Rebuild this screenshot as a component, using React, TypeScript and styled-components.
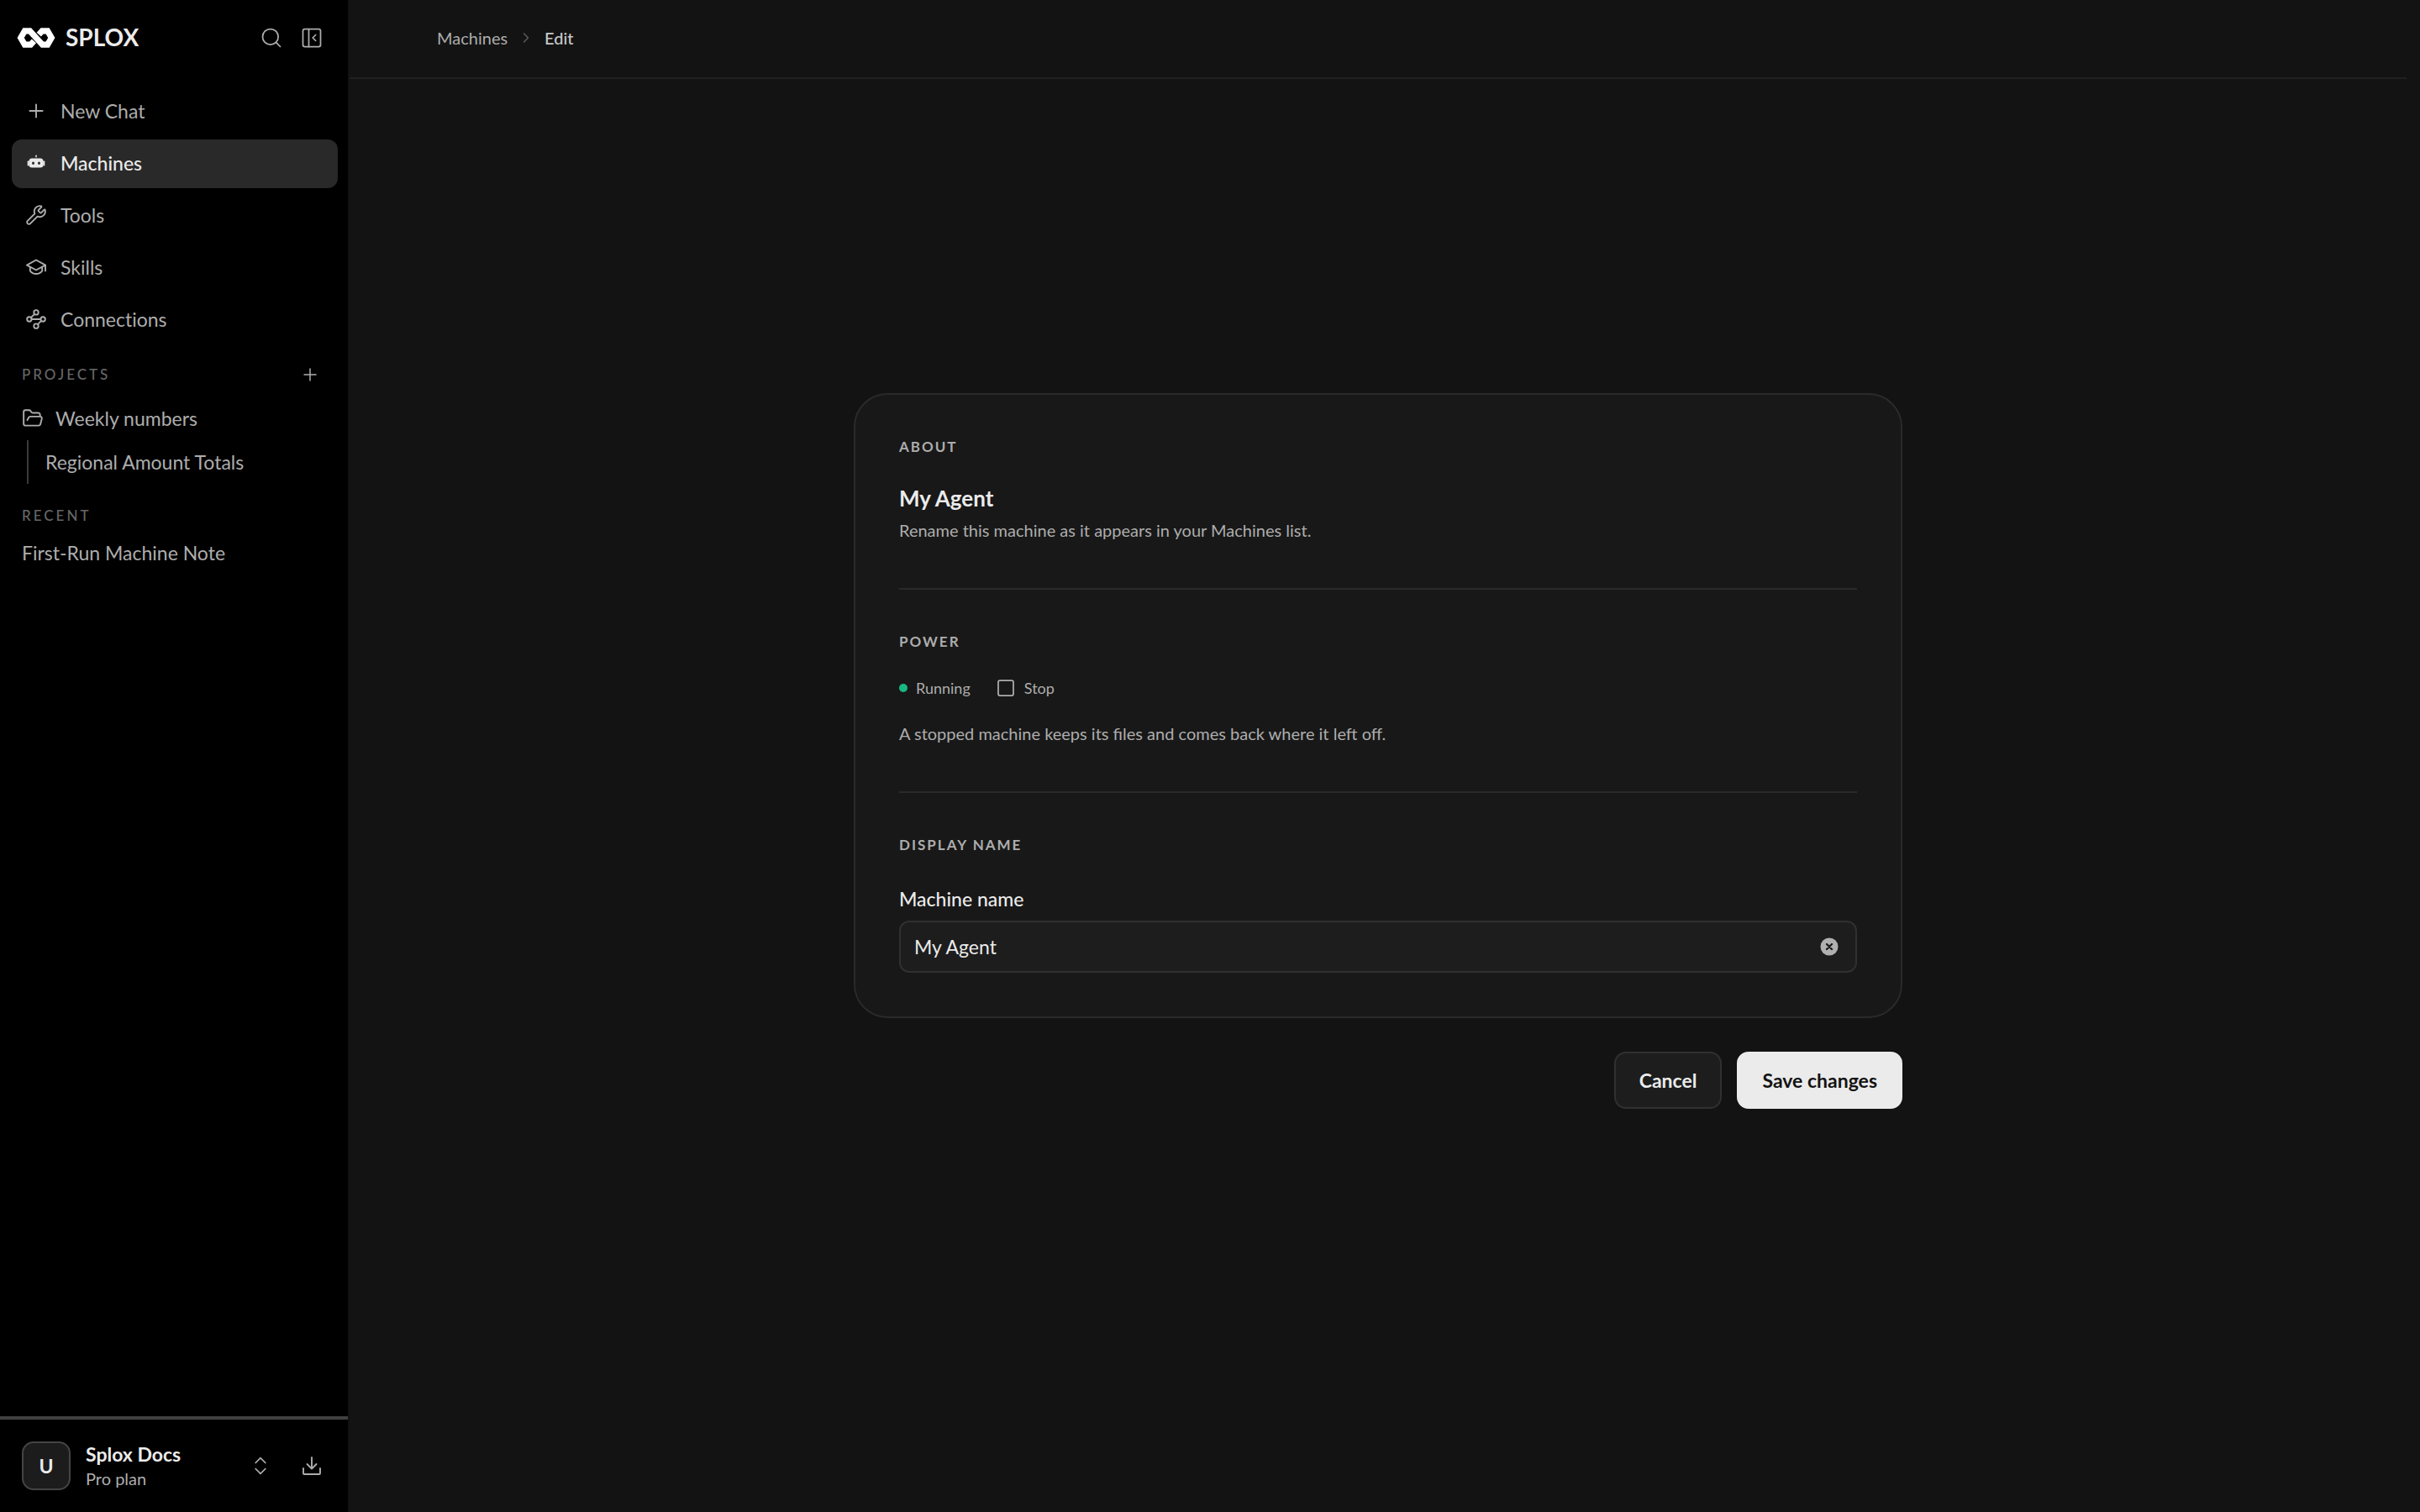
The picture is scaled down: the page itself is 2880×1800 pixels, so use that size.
import React, { useState } from "react";
import styled, { createGlobalStyle } from "styled-components";
import {
  ChevronRight,
  ChevronsUpDown,
  FolderOpen,
  PanelLeftClose,
  Plus,
  Search,
  Square,
  Waypoints,
  Wrench,
} from "lucide-react";

const color = {
  sidebar: "#000000",
  page: "#131313",
  card: "#181818",
  field: "#1d1d1d",
  active: "#292929",
  line: "#2a2a2a",
  headerLine: "#202020",
  strong: "#ebebeb",
  muted: "#adadad",
  faint: "#666666",
  green: "#19b883",
};

const GlobalStyle = createGlobalStyle`
  *, *::before, *::after { box-sizing: border-box; }
  body {
    margin: 0;
    background: ${color.page};
    color: ${color.strong};
    font-family: Lato, "Liberation Sans", sans-serif;
    font-size: 23px;
    line-height: 36px;
  }
  button, input { font: inherit; color: inherit; }
  button { margin: 0; padding: 0; border: 0; background: none; cursor: pointer; }
  a { color: inherit; text-decoration: none; }
  h1, h2, p, ul { margin: 0; padding: 0; }
  ul { list-style: none; }
  svg { display: block; flex: none; }
`;

const Shell = styled.div`
  display: flex;
  min-height: 100vh;
`;

/* Sidebar */

const Sidebar = styled.aside`
  display: flex;
  flex-direction: column;
  flex: none;
  width: 416px;
  background: ${color.sidebar};
  border-right: 2px solid #111111;
`;

const Brand = styled.div`
  display: flex;
  align-items: center;
  gap: 12px;
  height: 90px;
  padding: 0 28px 0 20px;
  margin-bottom: 14px;
`;

const BrandName = styled.span`
  flex: 1;
  padding-bottom: 2px;
  font-size: 28px;
  font-weight: 700;
`;

const IconButton = styled.button`
  display: grid;
  place-items: center;
  width: 30px;
  height: 30px;
  color: ${color.muted};
`;

const BrandActions = styled.div`
  display: flex;
  gap: 18px;
`;

const NavList = styled.ul`
  display: flex;
  flex-direction: column;
  gap: 4px;
  padding: 0 12px 0 14px;
`;

const NavLink = styled.a<{ $active?: boolean }>`
  display: flex;
  align-items: center;
  gap: 16px;
  height: 58px;
  padding: 0 16px 2px;
  border-radius: 12px;
  background: ${(p) => (p.$active ? color.active : "transparent")};
  color: ${(p) => (p.$active ? color.strong : color.muted)};
  font-weight: ${(p) => (p.$active ? 500 : 400)};
  font-variant-ligatures: none;
`;

const Group = styled.section`
  padding: 0 30px 0 26px;
`;

const GroupHead = styled.div`
  display: flex;
  align-items: center;
  justify-content: space-between;
  height: 36px;
`;

const GroupTitle = styled.h2`
  font-size: 17px;
  line-height: 24px;
  font-weight: 500;
  letter-spacing: 3px;
  text-transform: uppercase;
  color: ${color.faint};
`;

const GroupLink = styled.a`
  display: flex;
  align-items: center;
  gap: 14px;
  height: 52px;
  color: ${color.muted};
`;

const Tree = styled.ul`
  margin-left: 6px;
  padding-left: 20px;
  border-left: 2px solid #3a3a3a;
`;

const Spacer = styled.div`
  flex: 1;
`;

const Account = styled.footer`
  display: flex;
  align-items: center;
  gap: 32px;
  height: 114px;
  padding: 0 28px 0 26px;
  border-top: 4px solid #404040;
`;

const AccountButton = styled.button`
  display: flex;
  align-items: center;
  gap: 18px;
  flex: 1;
  text-align: left;
  color: ${color.muted};
`;

const Avatar = styled.span`
  display: grid;
  place-items: center;
  width: 58px;
  height: 58px;
  border: 2px solid #444444;
  border-radius: 14px;
  background: #1c1c1c;
  color: ${color.strong};
  font-weight: 700;
`;

const AccountText = styled.span`
  display: flex;
  flex-direction: column;
  flex: 1;
`;

const AccountName = styled.span`
  line-height: 30px;
  font-weight: 700;
  color: ${color.strong};
`;

const AccountPlan = styled.span`
  font-size: 20px;
  line-height: 28px;
`;

/* Main column */

const Main = styled.div`
  display: flex;
  flex-direction: column;
  flex: 1;
  min-width: 0;
  margin-right: 16px;
`;

const Header = styled.header`
  height: 94px;
  padding: 0 104px;
  border-bottom: 2px solid ${color.headerLine};
`;

const Crumbs = styled.nav`
  display: flex;
  align-items: center;
  gap: 12px;
  height: 90px;
  font-size: 20px;
  line-height: 30px;
  color: ${color.muted};
`;

const CurrentCrumb = styled.span`
  font-weight: 500;
  color: #c8c8c8;
`;

const Content = styled.main`
  display: flex;
  flex: 1;
  align-items: center;
  justify-content: center;
  padding: 0 40px 106px;
`;

const Form = styled.form`
  display: flex;
  flex-direction: column;
  gap: 40px;
  width: 100%;
  max-width: 1248px;
`;

const Card = styled.div`
  padding: 0 52px;
  border: 2px solid ${color.line};
  border-radius: 40px;
  background: ${color.card};
`;

const Section = styled.section`
  padding: 50px 0 54px;
  & + & {
    border-top: 2px solid ${color.line};
  }
  &:last-child {
    padding-bottom: 52px;
  }
`;

const SectionTitle = styled.h2`
  margin-bottom: 32px;
  font-size: 17px;
  line-height: 24px;
  font-weight: 700;
  letter-spacing: 2px;
  text-transform: uppercase;
  color: ${color.muted};
`;

const MachineTitle = styled.h1`
  margin-bottom: 6px;
  font-size: 26px;
  line-height: 34px;
  font-weight: 700;
`;

const Note = styled.p`
  font-size: 20px;
  line-height: 30px;
  color: ${color.muted};
`;

const PowerRow = styled.div`
  display: flex;
  align-items: center;
  gap: 30px;
  height: 22px;
  margin-bottom: 28px;
  font-size: 18px;
  line-height: 22px;
  color: ${color.muted};
`;

const Status = styled.span`
  display: flex;
  align-items: center;
  gap: 10px;
  &::before {
    content: "";
    width: 10px;
    height: 10px;
    border-radius: 50%;
    background: ${color.green};
  }
`;

const StopButton = styled.button`
  display: flex;
  align-items: center;
  gap: 10px;
`;

const FieldLabel = styled.label`
  display: block;
  padding-top: 2px;
  margin-bottom: 8px;
  font-weight: 500;
`;

const Field = styled.div`
  display: flex;
  align-items: center;
  height: 62px;
  padding: 0 16px;
  border: 2px solid #303030;
  border-radius: 12px;
  background: ${color.field};
`;

const FieldInput = styled.input`
  flex: 1;
  min-width: 0;
  padding: 0;
  border: 0;
  outline: 0;
  background: transparent;
`;

const Actions = styled.div`
  display: flex;
  justify-content: flex-end;
  gap: 18px;
`;

const ActionButton = styled.button<{ $primary?: boolean }>`
  height: 68px;
  padding: 0 28px;
  border: 2px solid ${(p) => (p.$primary ? color.strong : "#303030")};
  border-radius: 14px;
  background: ${(p) => (p.$primary ? color.strong : color.field)};
  color: ${(p) => (p.$primary ? "#131313" : color.strong)};
  font-weight: 700;
`;

/* Drawings */

const Logo = () => (
  <svg width="46" height="24" viewBox="0 0 138 74" fill="none" stroke="#fff" strokeWidth="22">
    <path d="M61 49 L49 62 H27 L12.500 37 L27 12 H46 L92 62 H111 L125.500 37 L111 12 H91 L79 25" />
  </svg>
);

const Robot = () => (
  <svg width="26" height="26" viewBox="0 0 26 26" fill="currentColor">
    <path
      fillRule="evenodd"
      d="M8 7.500h10a3.500 3.500 0 0 1 3.500 3.500v4a3.500 3.500 0 0 1-3.500 3.500H8A3.500 3.500 0 0 1 4.500 15v-4A3.500 3.500 0 0 1 8 7.500ZM9.500 11.500a1.500 1.800 0 1 0 0 3.600 1.500 1.800 0 0 0 0-3.600Zm7 0a1.500 1.800 0 1 0 0 3.600 1.500 1.800 0 0 0 0-3.600Z"
    />
    <rect x="2.700" y="10.500" width="2" height="6" rx=".7" />
    <rect x="21.300" y="10.500" width="2" height="6" rx=".7" />
    <rect x="12.300" y="3.500" width="1.400" height="3" rx=".7" />
  </svg>
);

const Cap = () => (
  <svg
    width="26"
    height="26"
    viewBox="0 0 26 26"
    fill="none"
    stroke="currentColor"
    strokeWidth="1.900"
    strokeLinecap="round"
    strokeLinejoin="round"
  >
    <path d="M13 4.500 L24 10.700 L13 16.500 L2 10.700 Z" />
    <path d="M24 10.700 V17.500" />
    <path d="M5.800 13.500 V17.500 C8 20.500 10.500 21 13 21 C15.500 21 18 20.500 20.200 17.500 V13.500" />
  </svg>
);

const Download = () => (
  <svg
    width="26"
    height="26"
    viewBox="0 0 26 26"
    fill="none"
    stroke="currentColor"
    strokeWidth="1.900"
    strokeLinecap="round"
    strokeLinejoin="round"
  >
    <path d="M13 3 V16" />
    <path d="M7.500 11 L13 16.500 L18.500 11" />
    <path d="M3 16 V22 A1 1 0 0 0 4 23 H22 A1 1 0 0 0 23 22 V16" />
  </svg>
);

const ClearIcon = () => (
  <svg width="22" height="22" viewBox="0 0 22 22">
    <circle cx="11" cy="11" r="10.500" fill="#b0b0b0" />
    <path d="M8 8 L14 14 M14 8 L8 14" stroke={color.field} strokeWidth="2.400" strokeLinecap="round" />
  </svg>
);

const nav = [
  { label: "New Chat", icon: <Plus size={26} strokeWidth={1.75} /> },
  { label: "Machines", icon: <Robot />, active: true },
  { label: "Tools", icon: <Wrench size={26} strokeWidth={1.75} /> },
  { label: "Skills", icon: <Cap /> },
  { label: "Connections", icon: <Waypoints size={26} strokeWidth={1.75} /> },
];

const ProjectsGroup = styled(Group)`
  padding-top: 18px;
  ${GroupHead} {
    margin-bottom: 8px;
  }
`;

const RecentGroup = styled(Group)`
  padding-top: 20px;
`;

export default function App() {
  const [name, setName] = useState("My Agent");

  return (
    <>
      <GlobalStyle />
      <Shell>
        <Sidebar>
          <Brand>
            <Logo />
            <BrandName>SPLOX</BrandName>
            <BrandActions>
              <IconButton aria-label="Search">
                <Search size={28} strokeWidth={1.5} />
              </IconButton>
              <IconButton aria-label="Collapse sidebar">
                <PanelLeftClose size={28} strokeWidth={1.5} />
              </IconButton>
            </BrandActions>
          </Brand>
          <nav>
            <NavList>
              {nav.map((item) => (
                <li key={item.label}>
                  <NavLink href="#" $active={item.active}>
                    {item.icon}
                    {item.label}
                  </NavLink>
                </li>
              ))}
            </NavList>
          </nav>
          <ProjectsGroup>
            <GroupHead>
              <GroupTitle>Projects</GroupTitle>
              <IconButton aria-label="New project">
                <Plus size={24} strokeWidth={1.5} />
              </IconButton>
            </GroupHead>
            <GroupLink href="#">
              <FolderOpen size={26} strokeWidth={1.75} />
              Weekly numbers
            </GroupLink>
            <Tree>
              <li>
                <GroupLink href="#">Regional Amount Totals</GroupLink>
              </li>
            </Tree>
          </ProjectsGroup>
          <RecentGroup>
            <GroupHead>
              <GroupTitle>Recent</GroupTitle>
            </GroupHead>
            <GroupLink href="#">First-Run Machine Note</GroupLink>
          </RecentGroup>
          <Spacer />
          <Account>
            <AccountButton>
              <Avatar>U</Avatar>
              <AccountText>
                <AccountName>Splox Docs</AccountName>
                <AccountPlan>Pro plan</AccountPlan>
              </AccountText>
              <ChevronsUpDown size={28} strokeWidth={1.5} />
            </AccountButton>
            <IconButton aria-label="Download">
              <Download />
            </IconButton>
          </Account>
        </Sidebar>
        <Main>
          <Header>
            <Crumbs aria-label="Breadcrumb">
              <a href="#">Machines</a>
              <ChevronRight size={20} strokeWidth={1.75} color="#5c5c5c" />
              <CurrentCrumb aria-current="page">Edit</CurrentCrumb>
            </Crumbs>
          </Header>
          <Content>
            <Form onSubmit={(e) => e.preventDefault()}>
              <Card>
                <Section>
                  <SectionTitle>About</SectionTitle>
                  <MachineTitle>My Agent</MachineTitle>
                  <Note>Rename this machine as it appears in your Machines list.</Note>
                </Section>
                <Section>
                  <SectionTitle>Power</SectionTitle>
                  <PowerRow>
                    <Status>Running</Status>
                    <StopButton type="button">
                      <Square size={24} strokeWidth={1.75} />
                      Stop
                    </StopButton>
                  </PowerRow>
                  <Note>A stopped machine keeps its files and comes back where it left off.</Note>
                </Section>
                <Section>
                  <SectionTitle>Display name</SectionTitle>
                  <FieldLabel htmlFor="machine-name">Machine name</FieldLabel>
                  <Field>
                    <FieldInput
                      id="machine-name"
                      value={name}
                      onChange={(e) => setName(e.target.value)}
                    />
                    <IconButton type="button" aria-label="Clear name" onClick={() => setName("")}>
                      <ClearIcon />
                    </IconButton>
                  </Field>
                </Section>
              </Card>
              <Actions>
                <ActionButton type="button">Cancel</ActionButton>
                <ActionButton type="submit" $primary>
                  Save changes
                </ActionButton>
              </Actions>
            </Form>
          </Content>
        </Main>
      </Shell>
    </>
  );
}
